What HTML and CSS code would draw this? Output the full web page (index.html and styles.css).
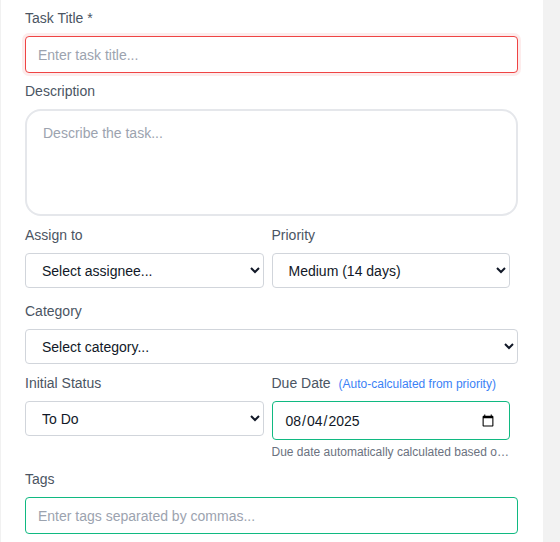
FILE: index.html
```html
<!DOCTYPE html>
<html lang="en">
<head>
<meta charset="utf-8">
<title>New Task</title>
<link rel="stylesheet" href="styles.css">
</head>
<body>
<div class="page">
  <form class="panel">
    <div class="group g-title">
      <label class="label" for="title">Task Title *</label>
      <input id="title" class="input input-error" type="text" placeholder="Enter task title...">
    </div>
    <div class="group g-desc">
      <label class="label" for="desc">Description</label>
      <textarea id="desc" class="textarea" placeholder="Describe the task..."></textarea>
    </div>
    <div class="row g-assign">
      <div class="col">
        <label class="label" for="assignee">Assign to</label>
        <select id="assignee" class="select">
          <option>Select assignee...</option>
        </select>
      </div>
      <div class="col">
        <label class="label" for="priority">Priority</label>
        <select id="priority" class="select">
          <option>Medium (14 days)</option>
        </select>
      </div>
    </div>
    <div class="group g-cat">
      <label class="label" for="category">Category</label>
      <select id="category" class="select">
        <option>Select category...</option>
      </select>
    </div>
    <div class="row g-status">
      <div class="col">
        <label class="label" for="status">Initial Status</label>
        <select id="status" class="select">
          <option>To Do</option>
        </select>
      </div>
      <div class="col">
        <label class="label" for="due">Due Date <span class="hint">(Auto-calculated from priority)</span></label>
        <input id="due" class="date" type="date" value="2025-08-04">
        <p class="help" title="Due date automatically calculated based on priority level">Due date automatically calculated based on priority level</p>
      </div>
    </div>
    <div class="group">
      <label class="label" for="tags">Tags</label>
      <input id="tags" class="input input-ok" type="text" placeholder="Enter tags separated by commas...">
    </div>
  </form>
  <div class="track"></div>
</div>
</body>
</html>
```

FILE: styles.css
```css
html, body {
  margin: 0;
  padding: 0;
  height: 100%;
  overflow: hidden;
}
body {
  font-family: "Liberation Sans", Arial, sans-serif;
  font-size: 14px;
  color: #111827;
  background: #ffffff;
}
.page {
  display: flex;
  height: 542px;
}
.panel {
  flex: 1;
  background: #ffffff;
  border-left: 1px solid #f1f1f1;
  padding: 10px 25px 0 24px;
  box-sizing: border-box;
  min-width: 0;
}
.track {
  width: 17px;
  flex: none;
  background: #f2f2f2;
}
.label {
  display: block;
  font-size: 14px;
  line-height: 16px;
  height: 16px;
  color: #4b5563;
  margin-bottom: 10px;
  white-space: nowrap;
}
.hint {
  font-size: 12px;
  line-height: 12px;
  color: #3b82f6;
  margin-left: 4px;
}
.group { margin-bottom: 10px; }
.g-desc { margin-bottom: 11px; }
.g-assign { margin-bottom: 15px; }
.g-cat { margin-bottom: 11px; }
.g-status { margin-bottom: 11px; }

.input {
  display: block;
  width: 100%;
  box-sizing: border-box;
  height: 37px;
  padding: 0 12px;
  font-family: "Liberation Sans", Arial, sans-serif;
  font-size: 14px;
  color: #111827;
  border-radius: 4px;
  border: 1px solid #d1d5db;
  background: #ffffff;
  outline: none;
}
.input::placeholder { color: #9ca3af; }
.input-error {
  border-color: #ef4444;
  box-shadow: 0 0 0 3px rgba(239, 68, 68, 0.1);
}
.input-ok { border-color: #10b981; }

.textarea {
  display: block;
  width: 100%;
  box-sizing: border-box;
  height: 107px;
  padding: 14px 16px;
  font-family: "Liberation Sans", Arial, sans-serif;
  font-size: 14px;
  border: 2px solid #e5e7eb;
  border-radius: 16px;
  resize: none;
  outline: none;
}
.textarea::placeholder { color: #9ca3af; }

.row {
  display: grid;
  grid-template-columns: 1fr 1fr;
  column-gap: 8px;
  margin-right: 8px;
}
.col { min-width: 0; }

.select {
  display: block;
  width: 100%;
  box-sizing: border-box;
  height: 35px;
  padding: 0 12px;
  font-family: "Liberation Sans", Arial, sans-serif;
  font-size: 14px;
  color: #111827;
  background: #ffffff;
  border: 1px solid #d1d5db;
  border-radius: 4px;
  outline: none;
}
.date {
  display: block;
  width: 100%;
  box-sizing: border-box;
  height: 39px;
  padding: 0 12px;
  font-family: "Liberation Sans", Arial, sans-serif;
  font-size: 14px;
  color: #111827;
  background: #ffffff;
  border: 1px solid #10b981;
  border-radius: 4px;
  outline: none;
}
.help {
  margin: 4px 0 0;
  font-size: 12px;
  line-height: 16px;
  color: #6b7280;
  white-space: nowrap;
  overflow: hidden;
  text-overflow: ellipsis;
}
```
